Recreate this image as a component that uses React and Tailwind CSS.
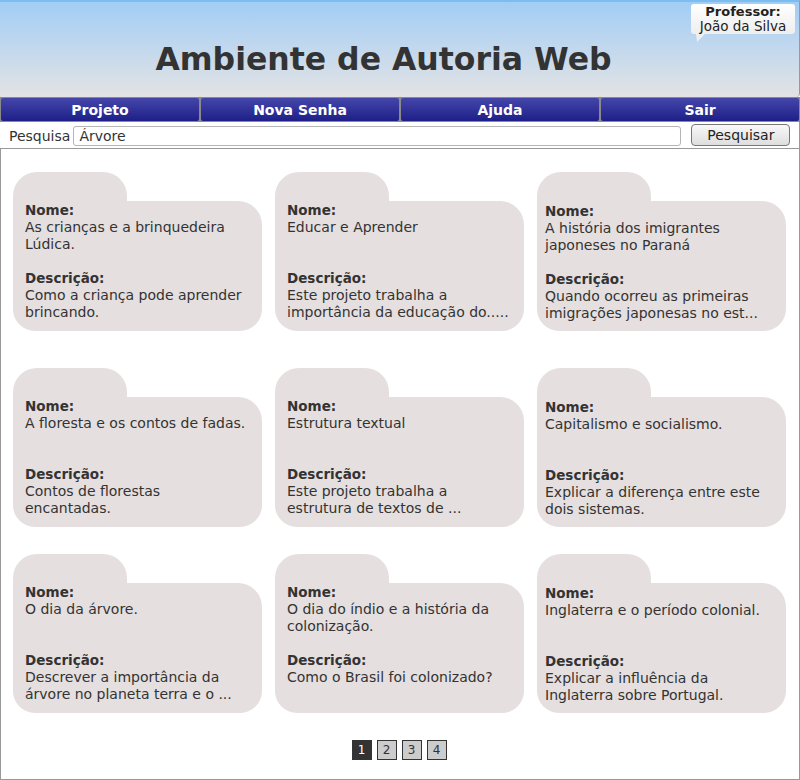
import React from 'react';

const projects = [
  { nome: ['As crianças e a brinquedeira', 'Lúdica.'], desc: ['Como a criança pode aprender', 'brincando.'] },
  { nome: ['Educar e Aprender'], desc: ['Este projeto trabalha a', 'importância da educação do.....'] },
  { nome: ['A história dos imigrantes', 'japoneses no Paraná'], desc: ['Quando ocorreu as primeiras', 'imigrações japonesas no est...'] },
  { nome: ['A floresta e os contos de fadas.'], desc: ['Contos de florestas', 'encantadas.'] },
  { nome: ['Estrutura textual'], desc: ['Este projeto trabalha a', 'estrutura de textos de ...'] },
  { nome: ['Capitalismo e socialismo.'], desc: ['Explicar a diferença entre este', 'dois sistemas.'] },
  { nome: ['O dia da árvore.'], desc: ['Descrever a importância da', 'árvore no planeta terra e o ...'] },
  { nome: ['O dia do índio e a história da', 'colonização.'], desc: ['Como o Brasil foi colonizado?'] },
  { nome: ['Inglaterra e o período colonial.'], desc: ['Explicar a influência da', 'Inglaterra sobre Portugal.'] }
];

const rowMargins = ['mt-0', 'mt-[37px]', 'mt-[27px]'];

function ProjectCard({ project, last }) {
  return (
    <div className="w-[249px]">
      <div className="h-[29px] w-[114px] rounded-t-[24px] bg-[#e5dfdf]" />
      <div
        className={
          'h-[130px] rounded-tr-[24px] rounded-b-[22px] bg-[#e5dfdf] text-[#333] leading-[17px] ' +
          (last ? 'pl-[8px] pt-[2px]' : 'pl-[12px] pt-[1px]')
        }
      >
        <div className="text-[13.5px] font-bold">Nome:</div>
        <div className="h-[34px] text-[14px] whitespace-nowrap">
          {project.nome.map(l => (
            <div key={l}>{l}</div>
          ))}
        </div>
        <div className="h-[17px]" />
        <div className="text-[13.5px] font-bold">Descrição:</div>
        <div className="text-[14px] whitespace-nowrap">
          {project.desc.map(l => (
            <div key={l}>{l}</div>
          ))}
        </div>
      </div>
    </div>
  );
}

export default function App() {
  const rows = [projects.slice(0, 3), projects.slice(3, 6), projects.slice(6, 9)];

  return (
    <div className="w-[800px] h-[780px] bg-white font-['DejaVu_Sans',Verdana,sans-serif] text-[#333]">
      {/* header */}
      <div className="relative h-[97px] border-t-2 border-r border-t-[#7cbdf0] border-r-[#999] rounded-br-[4px] bg-gradient-to-b from-[#a2cdf6] to-[#e3e3e3]">
        <h1 className="pt-[38px] pr-[32px] text-center text-[31.5px] leading-[38px] font-bold text-[#333]">
          Ambiente de Autoria Web
        </h1>
        <div className="absolute top-[2px] right-[4px] w-[104px] h-[30px] rounded-[3px] bg-gradient-to-b from-white to-[#eeeeee] text-center leading-[15px] text-[#222]">
          <div className="text-[13px] font-bold">Professor:</div>
          <div className="text-[13.5px]">João da Silva</div>
          <svg className="absolute left-[5px] top-[30px]" width="9" height="8" viewBox="0 0 9 8">
            <polygon points="0,0 9,0 1,8" fill="#eeeeee" />
          </svg>
        </div>
      </div>

      {/* menu */}
      <nav className="flex gap-[2px] h-[25px] bg-[#8a8a8a] py-[1px] px-[1px]">
        {['Projeto', 'Nova Senha', 'Ajuda', 'Sair'].map(item => (
          <a
            key={item}
            href="#"
            className="flex-1 flex items-center justify-center pt-[2px] rounded-[2px] bg-gradient-to-b from-[#4646aa] to-[#1e1e88] text-white text-[14px] font-bold"
          >
            {item}
          </a>
        ))}
      </nav>

      {/* search */}
      <div className="flex items-center h-[26px] pt-[2px] pl-[9px] border-r border-[#999]">
        <span className="text-[14px] text-[#333]">Pesquisa</span>
        <input
          defaultValue="Árvore"
          className="ml-[3px] w-[608px] h-[20px] px-[5px] rounded-[3px] border border-[#b5b5b5] text-[14px] text-[#333] outline-none"
        />
        <button className="ml-[10px] -mt-[2px] w-[99px] h-[22px] rounded-[4px] border border-[#777] bg-gradient-to-b from-[#f8f8f8] to-[#dedede] text-[14px] text-[#222]">
          Pesquisar
        </button>
      </div>

      {/* projects */}
      <main className="h-[632px] border border-[#999] pt-[23px] pl-[12px]">
        {rows.map((row, i) => (
          <div key={i} className={'flex gap-[13px] ' + rowMargins[i]}>
            {row.map((p, j) => (
              <ProjectCard key={j} project={p} last={j === 2} />
            ))}
          </div>
        ))}

        <div className="mt-[27px] flex justify-center gap-[5px] pr-[14px] text-[12px]">
          {[1, 2, 3, 4].map(n => (
            <a
              key={n}
              href="#"
              className={
                'w-[20px] h-[20px] flex items-center justify-center border border-[#333] ' +
                (n === 1 ? 'bg-[#333] text-white' : 'bg-[#cccccc] text-[#333]')
              }
            >
              {n}
            </a>
          ))}
        </div>
      </main>
    </div>
  );
}
